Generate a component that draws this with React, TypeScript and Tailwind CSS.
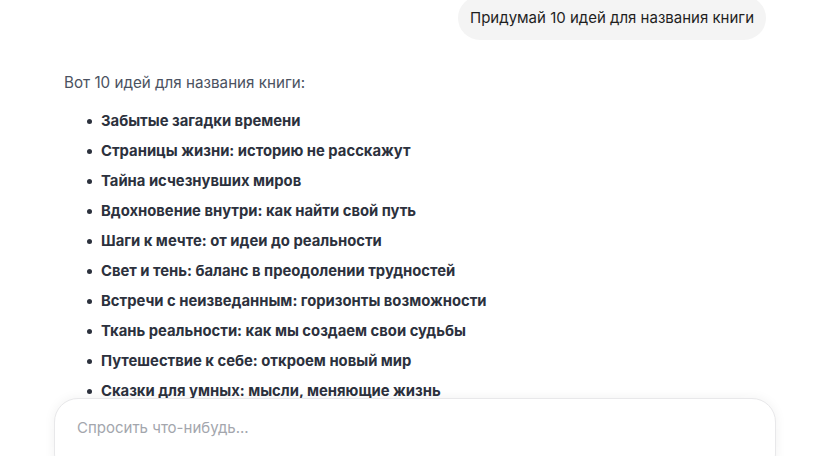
import React from "react";

const ideas = [
  "Забытые загадки времени",
  "Страницы жизни: историю не расскажут",
  "Тайна исчезнувших миров",
  "Вдохновение внутри: как найти свой путь",
  "Шаги к мечте: от идеи до реальности",
  "Свет и тень: баланс в преодолении трудностей",
  "Встречи с неизведанным: горизонты возможности",
  "Ткань реальности: как мы создаем свои судьбы",
  "Путешествие к себе: откроем новый мир",
  "Сказки для умных: мысли, меняющие жизнь",
];

export default function App() {
  return (
    <div className="relative h-[456px] w-[832px] overflow-hidden bg-white font-['Inter',sans-serif]">
      <div className="mx-auto w-[704px]">
        <div className="-mt-1 flex justify-end pr-[2px]">
          <div className="rounded-3xl bg-[#f4f4f4] px-3 py-2.5 text-[15px] leading-6 text-[#1f1f1f]">
            Придумай 10 идей для названия книги
          </div>
        </div>

        <p className="mt-[31px] text-[15.2px] leading-6 text-[#4b5261]">Вот 10 идей для названия книги:</p>

        <ul className="mt-[14px] flex flex-col gap-[6px] pl-[23px]">
          {ideas.map((t, i) => (
            <li key={i} className="flex items-center gap-[9px] text-[14.8px] font-bold leading-6 text-[#2c313d]">
              <span className="h-[5px] w-[5px] rounded-full bg-[#2c313d]" />
              {t}
            </li>
          ))}
        </ul>
      </div>

      <div className="absolute left-[54px] top-[398px] h-[80px] w-[722px] rounded-3xl border border-[#e8e8ea] bg-white px-[22px] pt-[19px] shadow-[0_0_12px_rgba(0,0,0,0.06)]">
        <div className="text-[15px] leading-5 text-[#a3a6ad]">Спросить что-нибудь...</div>
      </div>
    </div>
  );
}
